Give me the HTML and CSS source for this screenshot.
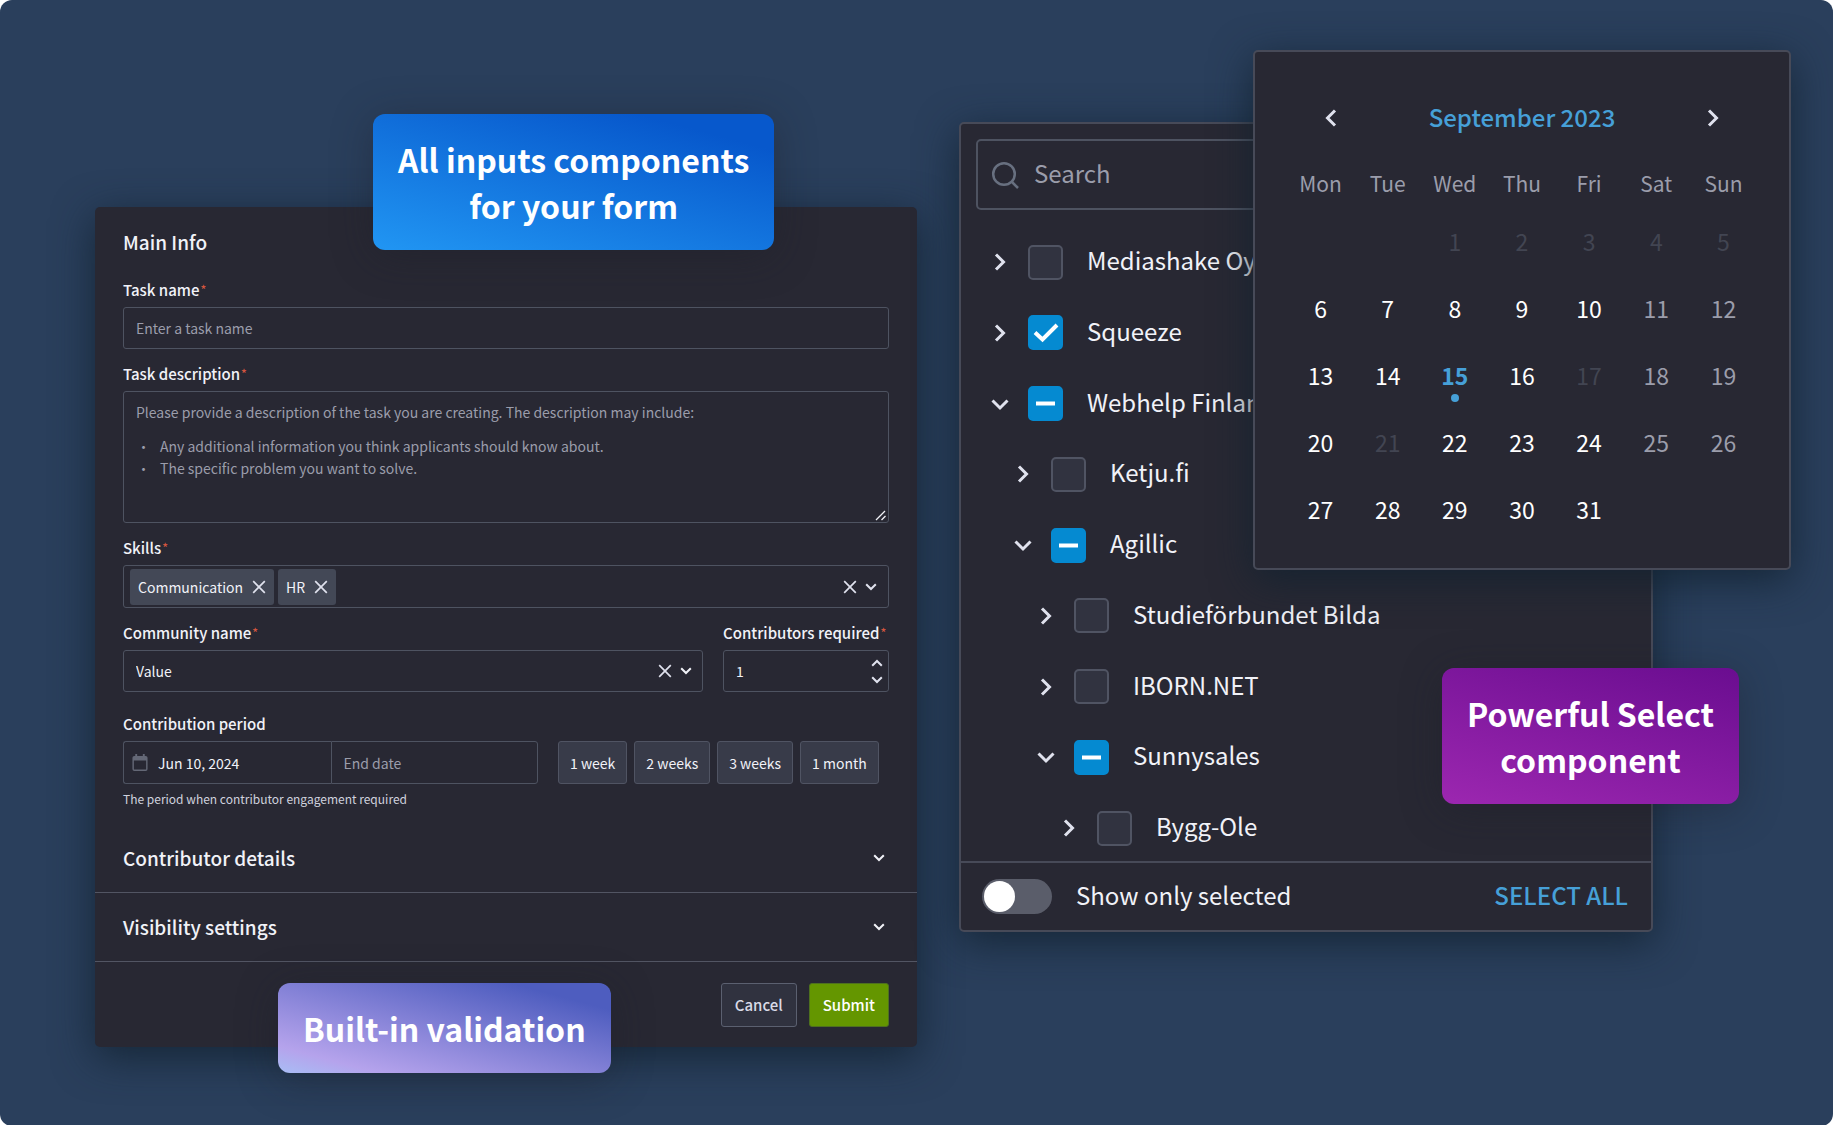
FILE: index.html
```html
<!DOCTYPE html>
<html lang="en">
<head>
<meta charset="utf-8">
<meta name="viewport" content="width=device-width, initial-scale=1">
<title>Form components</title>
<link rel="stylesheet" href="styles.css">
</head>
<body>
<svg class="sprite" aria-hidden="true">
  <symbol id="close" viewBox="0 0 14 14"><path d="M1.200 1.200l11.600 11.600M12.800 1.200L1.200 12.800" fill="none" stroke="currentColor" stroke-width="1.700"/></symbol>
  <symbol id="down" viewBox="0 0 12 8"><path d="M1.200 1.200L6 6l4.800-4.800" fill="none" stroke="currentColor" stroke-width="2"/></symbol>
  <symbol id="up" viewBox="0 0 12 8"><path d="M1.200 6.800L6 2l4.800 4.800" fill="none" stroke="currentColor" stroke-width="2"/></symbol>
  <symbol id="big-down" viewBox="0 0 18 18"><path d="M1.500 5.500L9 13l7.500-7.500" fill="none" stroke="currentColor" stroke-width="3"/></symbol>
  <symbol id="big-right" viewBox="0 0 18 18"><path d="M5 1.500l7.500 7.500L5 16.500" fill="none" stroke="currentColor" stroke-width="3"/></symbol>
  <symbol id="big-left" viewBox="0 0 18 18"><path d="M13 1.500L5.500 9l7.500 7.500" fill="none" stroke="currentColor" stroke-width="3"/></symbol>
</svg>
<main class="canvas">
  <form class="form-card">
    <h2 class="title">Main Info</h2>
    <div class="fields">
      <div class="field">
        <label class="label" for="task">Task name<span class="req">*</span></label>
        <input class="box" id="task" type="text" placeholder="Enter a task name">
      </div>
      <div class="field">
        <label class="label" for="desc">Task description<span class="req">*</span></label>
        <div class="stack">
          <textarea class="box area" id="desc" aria-describedby="desc-hint"></textarea>
          <div class="hint" id="desc-hint">
            <p>Please provide a description of the task you are creating. The description may include:</p>
            <ul>
              <li>Any additional information you think applicants should know about.</li>
              <li>The specific problem you want to solve.</li>
            </ul>
          </div>
          <svg class="grip" viewBox="0 0 12 12" aria-hidden="true"><path d="M1 11L10 2M6.500 11L10.500 7" fill="none" stroke="currentColor" stroke-width="1.300"/></svg>
        </div>
      </div>
      <div class="field">
        <span class="label" id="skills-label">Skills<span class="req">*</span></span>
        <div class="box multi" role="group" aria-labelledby="skills-label">
          <span class="tag">Communication<button class="icon-btn" type="button" aria-label="Remove Communication"><svg class="x"><use href="#close"/></svg></button></span>
          <span class="tag">HR<button class="icon-btn" type="button" aria-label="Remove HR"><svg class="x"><use href="#close"/></svg></button></span>
          <span class="tools">
            <button class="icon-btn" type="button" aria-label="Clear skills"><svg class="x"><use href="#close"/></svg></button>
            <button class="icon-btn" type="button" aria-label="Open skills"><svg class="arrow"><use href="#down"/></svg></button>
          </span>
        </div>
      </div>
      <div class="pair">
        <div class="field">
          <label class="label" for="community">Community name<span class="req">*</span></label>
          <div class="stack">
            <select class="box" id="community"><option>Value</option></select>
            <span class="tools over">
              <button class="icon-btn" type="button" aria-label="Clear community"><svg class="x"><use href="#close"/></svg></button>
              <svg class="arrow" aria-hidden="true"><use href="#down"/></svg>
            </span>
          </div>
        </div>
        <div class="field">
          <label class="label" for="count">Contributors required<span class="req">*</span></label>
          <div class="stack">
            <input class="box" id="count" type="number" value="1">
            <span class="steps">
              <button class="icon-btn" type="button" aria-label="More"><svg class="arrow"><use href="#up"/></svg></button>
              <button class="icon-btn" type="button" aria-label="Fewer"><svg class="arrow"><use href="#down"/></svg></button>
            </span>
          </div>
        </div>
      </div>
      <div class="field period">
        <label class="label" for="start">Contribution period</label>
        <div class="dates">
          <div class="range">
            <div class="stack">
              <input class="box start" id="start" type="text" value="Jun 10, 2024">
              <svg class="cal-icon" viewBox="0 0 16 18" aria-hidden="true"><path d="M2 2h1V0h2v2h6V0h2v2h1a2 2 0 0 1 2 2v12a2 2 0 0 1-2 2H2a2 2 0 0 1-2-2V4a2 2 0 0 1 2-2zm-.500 5v9.500h13V7z" fill="currentColor" fill-rule="evenodd"/></svg>
            </div>
            <input class="box end" type="text" placeholder="End date" aria-label="End date">
          </div>
          <div class="presets">
            <button class="preset" type="button">1 week</button>
            <button class="preset" type="button">2 weeks</button>
            <button class="preset" type="button">3 weeks</button>
            <button class="preset" type="button">1 month</button>
          </div>
        </div>
        <p class="help">The period when contributor engagement required</p>
      </div>
    </div>
    <button class="section" type="button">Contributor details<svg class="arrow"><use href="#down"/></svg></button>
    <button class="section" type="button">Visibility settings<svg class="arrow"><use href="#down"/></svg></button>
    <div class="actions">
      <button class="btn" type="button">Cancel</button>
      <button class="btn primary" type="submit">Submit</button>
    </div>
    <p class="badge blue">All inputs components<br>for your form</p>
    <p class="badge lilac">Built-in validation</p>
  </form>

  <section class="select-panel" aria-label="Companies">
    <div class="stack search-row">
      <input class="search" type="search" placeholder="Search" aria-label="Search">
      <svg class="lens" viewBox="0 0 28 28" aria-hidden="true"><circle cx="13" cy="13" r="10.800"/><path d="M20.500 20.500L27 27"/></svg>
    </div>
    <ul class="tree">
      <li class="node l0"><button class="icon-btn" type="button" aria-label="Expand"><svg class="twist"><use href="#big-right"/></svg></button><label class="item"><span class="stack"><input class="check" type="checkbox"></span><span class="name">Mediashake Oy</span></label></li>
      <li class="node l0"><button class="icon-btn" type="button" aria-label="Expand"><svg class="twist"><use href="#big-right"/></svg></button><label class="item"><span class="stack"><input class="check" type="checkbox" checked><svg class="mark" viewBox="0 0 35 35"><path d="M7 17.500l7.500 7L29 10"/></svg></span><span class="name">Squeeze</span></label></li>
      <li class="node l0"><button class="icon-btn" type="button" aria-label="Collapse"><svg class="twist"><use href="#big-down"/></svg></button><label class="item"><span class="stack"><input class="check" type="checkbox" checked><svg class="mark" viewBox="0 0 35 35"><path d="M8 17.500h19"/></svg></span><span class="name">Webhelp Finland</span></label></li>
      <li class="node l1"><button class="icon-btn" type="button" aria-label="Expand"><svg class="twist"><use href="#big-right"/></svg></button><label class="item"><span class="stack"><input class="check" type="checkbox"></span><span class="name">Ketju.fi</span></label></li>
      <li class="node l1"><button class="icon-btn" type="button" aria-label="Collapse"><svg class="twist"><use href="#big-down"/></svg></button><label class="item"><span class="stack"><input class="check" type="checkbox" checked><svg class="mark" viewBox="0 0 35 35"><path d="M8 17.500h19"/></svg></span><span class="name">Agillic</span></label></li>
      <li class="node l2"><button class="icon-btn" type="button" aria-label="Expand"><svg class="twist"><use href="#big-right"/></svg></button><label class="item"><span class="stack"><input class="check" type="checkbox"></span><span class="name">Studieförbundet Bilda</span></label></li>
      <li class="node l2"><button class="icon-btn" type="button" aria-label="Expand"><svg class="twist"><use href="#big-right"/></svg></button><label class="item"><span class="stack"><input class="check" type="checkbox"></span><span class="name">IBORN.NET</span></label></li>
      <li class="node l2"><button class="icon-btn" type="button" aria-label="Collapse"><svg class="twist"><use href="#big-down"/></svg></button><label class="item"><span class="stack"><input class="check" type="checkbox" checked><svg class="mark" viewBox="0 0 35 35"><path d="M8 17.500h19"/></svg></span><span class="name">Sunnysales</span></label></li>
      <li class="node l3"><button class="icon-btn" type="button" aria-label="Expand"><svg class="twist"><use href="#big-right"/></svg></button><label class="item"><span class="stack"><input class="check" type="checkbox"></span><span class="name">Bygg-Ole</span></label></li>
    </ul>
    <div class="panel-foot">
      <label class="item"><input class="toggle" type="checkbox" role="switch"><span class="name">Show only selected</span></label>
      <button class="select-all name" type="button">SELECT ALL</button>
    </div>
    <p class="badge purple">Powerful Select<br>component</p>
  </section>

  <section class="calendar" aria-label="Calendar">
    <header class="cal-head">
      <button class="icon-btn" type="button" aria-label="Previous month"><svg class="twist"><use href="#big-left"/></svg></button>
      <h2 class="month">September 2023</h2>
      <button class="icon-btn" type="button" aria-label="Next month"><svg class="twist"><use href="#big-right"/></svg></button>
    </header>
    <table class="days">
      <thead><tr><th>Mon</th><th>Tue</th><th>Wed</th><th>Thu</th><th>Fri</th><th>Sat</th><th>Sun</th></tr></thead>
      <tbody>
        <tr><td></td><td></td><td class="off">1</td><td class="off">2</td><td class="off">3</td><td class="off">4</td><td class="off">5</td></tr>
        <tr><td>6</td><td>7</td><td>8</td><td>9</td><td>10</td><td class="rest">11</td><td class="rest">12</td></tr>
        <tr><td>13</td><td>14</td><td class="today">15</td><td>16</td><td class="off">17</td><td class="rest">18</td><td class="rest">19</td></tr>
        <tr><td>20</td><td class="off">21</td><td>22</td><td>23</td><td>24</td><td class="rest">25</td><td class="rest">26</td></tr>
        <tr><td>27</td><td>28</td><td>29</td><td>30</td><td>31</td><td></td><td></td></tr>
      </tbody>
    </table>
  </section>
</main>
</body>
</html>
```
FILE: styles.css
```css
:root {
  --card: #282833;
  --line: #4e5361;
  --soft: #9b9dab;
  --text: #f1f2f8;
  --blue: #46a0d8;
  --shadow: 0 10px 40px rgba(18, 34, 48, .85);
}

* { box-sizing: border-box; }

body {
  margin: 0;
  background: #fff;
  color: var(--text);
  font: 14px/22px "Noto Sans CJK SC", "Noto Sans", sans-serif;
}

h2, p, ul { margin: 0; padding: 0; }
button, input, select, textarea { font: inherit; color: inherit; margin: 0; }
.sprite { display: none; }

.canvas {
  position: relative;
  display: grid;
  grid-template-columns: 822fr 694fr;
  column-gap: 42px;
  align-items: start;
  min-height: 100vh;
  padding: 122px 180px 79px 95px;
  border-radius: 12px;
  background: #2a3f5c;
}

.stack { display: grid; }
.stack > * { grid-area: 1 / 1; }

/* Form */
.form-card {
  position: relative;
  margin-top: 85px;
  padding-top: 23px;
  border-radius: 5px;
  background: var(--card);
  box-shadow: var(--shadow);
}

.title {
  padding: 0 28px;
  font-size: 19px;
  line-height: 24px;
  font-weight: 500;
}

.fields {
  display: flex;
  flex-direction: column;
  gap: 14px;
  padding: 25px 28px 15px;
}

.field { display: flex; flex-direction: column; min-width: 0; }
.label { margin-bottom: 6px; font-size: 15px; font-weight: 500; }
.req { color: #d4553f; font-size: 12px; line-height: 1; vertical-align: 2px; margin-left: 1px; }

.box {
  width: 100%;
  height: 42px;
  padding: 0 12px;
  border: 1px solid var(--line);
  border-radius: 3px;
  background: var(--card);
  outline: none;
}

.box::placeholder { color: var(--soft); opacity: 1; }
select.box { appearance: none; }
.area { height: 132px; resize: none; }

.hint {
  padding: 10px 13px;
  color: var(--soft);
  pointer-events: none;
}

.hint ul { margin-top: 12px; padding-left: 24px; list-style: "•\a0\a0\a0"; }

.grip {
  place-self: end;
  width: 12px;
  height: 12px;
  margin: 0 2px 2px 0;
}

.multi { display: flex; align-items: center; gap: 4px; height: 43px; padding: 0 0 0 6px; }

.tag {
  display: flex;
  align-items: center;
  gap: 9px;
  height: 36px;
  padding: 0 8px;
  border-radius: 3px;
  background: #434856;
}

.icon-btn {
  display: flex;
  padding: 0;
  border: 0;
  background: none;
  color: #e0e2ee;
}

.x { width: 14px; height: 14px; }
.arrow { width: 12px; height: 8px; }

.tools {
  display: flex;
  align-items: center;
  gap: 8px;
  margin-left: auto;
  padding-right: 11px;
}

.tools.over { justify-self: end; }
.pair { display: grid; grid-template-columns: 1fr 166px; column-gap: 20px; }

input[type="number"] { appearance: textfield; }
input[type="number"]::-webkit-inner-spin-button { appearance: none; margin: 0; }

.steps {
  display: flex;
  flex-direction: column;
  justify-content: center;
  justify-self: end;
  gap: 9px;
  padding-right: 6px;
}

.period { margin-top: 7px; }
.dates { display: flex; gap: 20px; }
.range { display: grid; grid-template-columns: 1fr 1fr; width: 415px; }
.range .box { height: 43px; }
.start { padding-left: 34px; border-right: 0; border-radius: 3px 0 0 3px; }
.end { border-radius: 0 3px 3px 0; }
.cal-icon { place-self: center start; width: 16px; height: 17px; margin-left: 9px; color: #646876; }
.presets { display: flex; gap: 7px; }

.preset {
  height: 43px;
  padding: 0 11px;
  border: 1px solid #505463;
  border-radius: 3px;
  background: #383b49;
  white-space: nowrap;
}

.help { margin-top: 5px; color: #d0d2de; font-size: 12px; line-height: 20px; }

.section {
  display: flex;
  align-items: center;
  justify-content: space-between;
  width: 100%;
  height: 69px;
  padding: 0 32px 0 28px;
  border: 0;
  border-bottom: 1px solid #525563;
  background: none;
  font-size: 19px;
  font-weight: 500;
}

.actions {
  display: flex;
  justify-content: flex-end;
  gap: 12px;
  padding: 21px 28px 20px;
}

.btn {
  height: 44px;
  padding: 0 13px;
  border: 1px solid #5b6070;
  border-radius: 3px;
  background: #30323f;
  color: #d9dae6;
  font-size: 15px;
  font-weight: 500;
}

.primary { border-color: #4e701f; background: #649600; color: #fff; }

/* Callouts laid over the cards */
.badge {
  position: absolute;
  padding: 22px 25px;
  border-radius: 12px;
  color: #fff;
  font-size: 32px;
  line-height: 46px;
  font-weight: 700;
  text-align: center;
  white-space: nowrap;
  box-shadow: 0 6px 40px rgba(28, 30, 40, .4);
}

.blue { top: -93px; left: 278px; background: linear-gradient(15deg, #2196f3, #0758cc 85%); }
.lilac { bottom: -26px; left: 183px; background: linear-gradient(15deg, #a8bdf5, #b5a3ec 15%, #4e5dbf 85%); }
.purple { right: -88px; bottom: 126px; background: linear-gradient(15deg, #9c27b0, #6a0d90); }

/* Tree select */
.select-panel {
  position: relative;
  border: 2px solid #474a58;
  border-radius: 5px;
  background: var(--card);
  box-shadow: var(--shadow);
  font-size: 24px;
  line-height: 34px;
}

.search-row { padding: 15px 15px 0; }

.search {
  appearance: none;
  width: 100%;
  height: 71px;
  padding: 0 20px 4px 56px;
  border: 2px solid var(--line);
  border-radius: 5px;
  background: none;
  outline: none;
}

.search::placeholder { color: var(--soft); opacity: 1; }

.lens {
  place-self: center start;
  width: 28px;
  height: 28px;
  margin-left: 15px;
  fill: none;
  stroke: #687080;
  stroke-width: 2.500;
}

.tree {
  display: flex;
  flex-direction: column;
  justify-content: space-between;
  min-height: 651px;
  padding-top: 19px;
  list-style: none;
}

.node { display: flex; align-items: center; gap: 19px; height: 66px; padding-left: 30px; }
.l1 { padding-left: 53px; }
.l2 { padding-left: 76px; }
.l3 { padding-left: 99px; }
.twist { width: 18px; height: 18px; }
.item { display: flex; align-items: center; gap: 24px; }
.item .name, .select-all.name { padding-bottom: 4px; }

.check {
  appearance: none;
  width: 35px;
  height: 35px;
  border: 2px solid #505463;
  border-radius: 5px;
  background: #313340;
}

.check:checked { border-color: #058ad1; background: #058ad1; }
.mark { width: 35px; height: 35px; fill: none; stroke: #fff; stroke-width: 4; pointer-events: none; }

.panel-foot {
  display: flex;
  align-items: center;
  justify-content: space-between;
  height: 69px;
  padding: 0 23px 0 21px;
  border-top: 2px solid #474a58;
}

.toggle {
  appearance: none;
  display: flex;
  width: 70px;
  height: 35px;
  padding: 2px;
  border-radius: 18px;
  background: #5a5d6a;
}

.toggle::before { content: ""; width: 31px; height: 31px; border-radius: 50%; background: #fff; }
.select-all { padding: 0; border: 0; background: none; color: var(--blue); font-weight: 500; }

/* Calendar window, floating over the tree select */
.calendar {
  position: absolute;
  top: 50px;
  right: 42px;
  width: 538px;
  padding: 46px 32px 24px;
  border: 2px solid #474a58;
  border-radius: 5px;
  background: var(--card);
  box-shadow: var(--shadow);
}

.cal-head {
  display: flex;
  align-items: center;
  justify-content: space-between;
  height: 40px;
  padding: 0 35px;
  color: #fff;
}

.month { padding-bottom: 2px; color: var(--blue); font-size: 24px; line-height: 38px; font-weight: 500; }
.days { width: 100%; margin-top: 22px; border-collapse: collapse; table-layout: fixed; text-align: center; }
.days th { height: 49px; padding: 0 0 3px; color: var(--soft); font-size: 21px; font-weight: 400; }
.days td { height: 67px; padding: 0 0 3px; color: #fff; font-size: 23px; }
.days .rest { color: var(--soft); }
.days .off { color: #424552; }
.days .today { position: relative; color: var(--blue); font-weight: 700; }

.today::after {
  content: "";
  position: absolute;
  left: calc(50% - 4px);
  bottom: 8px;
  width: 8px;
  height: 8px;
  border-radius: 50%;
  background: var(--blue);
}
```
